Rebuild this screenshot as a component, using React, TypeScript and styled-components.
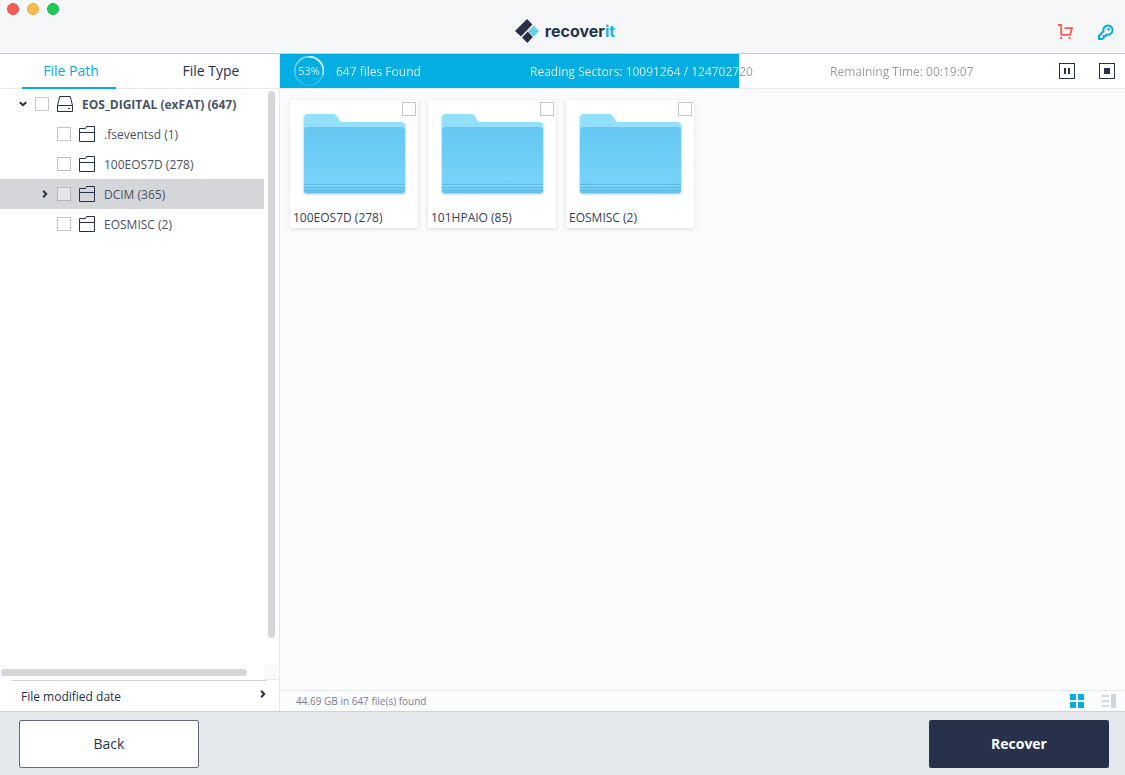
import React, { useState } from "react";
import styled, { createGlobalStyle, css } from "styled-components";

const color = {
  ink: "#273249",
  text: "#4a5263",
  cyan: "#04aee2",
  red: "#ff5a50",
  line: "#cfd2d8",
  softLine: "#e6e8ea",
  thumb: "#d5d6da",
};

const GlobalStyle = createGlobalStyle`
  *, *::before, *::after { box-sizing: border-box; }
  body {
    margin: 0;
    font-family: "Open Sans", "Noto Sans", sans-serif;
    font-size: 12px;
    line-height: 16px;
    color: ${color.ink};
  }
  button { font: inherit; color: inherit; border: 0; padding: 0; background: none; cursor: pointer; }
  svg { display: block; }
`;

const Window = styled.div`
  display: flex;
  flex-direction: column;
  min-height: 100vh;
  background: #fbfbfb;
`;

/* Caption text sits a little below the middle of its row. */
const Caption = styled.span`
  padding-top: 2px;
`;

/* Title bar */

const TitleBar = styled.header`
  display: grid;
  grid-template-columns: 1fr auto 1fr;
  align-items: center;
  height: 54px;
  padding: 0 11px 0 7px;
  background: #f5f7f9;
  border-bottom: 1px solid #cbced4;
`;

const WindowControls = styled.div`
  display: flex;
  gap: 8px;
  align-self: start;
  padding-top: 3px;
`;

const WindowDot = styled.button<{ $fill: string; $edge: string }>`
  width: 12px;
  height: 12px;
  border-radius: 50%;
  background: ${(p) => p.$fill};
  border: 1px solid ${(p) => p.$edge};
`;

const Brand = styled.div`
  display: flex;
  align-items: center;
  gap: 6px;
  padding: 8px 0 0 9px;
`;

const BrandName = styled.span`
  font-family: Inter, sans-serif;
  font-size: 16px;
  line-height: 20px;
  font-weight: 700;
  em { font-style: normal; color: #1cb4e6; }
`;

const TitleActions = styled.div`
  display: flex;
  justify-content: flex-end;
  gap: 24px;
  padding-top: 10px;
`;

const Main = styled.main`
  display: grid;
  grid-template-columns: 280px minmax(0, 1fr);
  flex: 1;
`;

/* Sidebar */

const Sidebar = styled.aside`
  display: flex;
  flex-direction: column;
  background: #fff;
  border-right: 1px solid ${color.softLine};
`;

const Tabs = styled.div`
  display: flex;
  gap: 46px;
  height: 35px;
  padding-left: 22px;
  border-bottom: 1px solid ${color.softLine};
`;

const Tab = styled.button<{ $active: boolean }>`
  width: 94px;
  height: 35px;
  padding-left: 4px;
  font-size: 14px;
  line-height: 20px;
  border-bottom: 2px solid ${(p) => (p.$active ? color.cyan : "transparent")};
  color: ${(p) => (p.$active ? color.cyan : color.ink)};
`;

const TreePane = styled.div`
  display: grid;
  grid-template-columns: minmax(0, 1fr) 15px;
  grid-template-rows: 1fr 15px;
  flex: 1;
`;

const Tree = styled.ul`
  margin: 0;
  padding: 0;
  list-style: none;
`;

const TreeRow = styled.li<{ $depth: number; $selected: boolean }>`
  display: flex;
  align-items: center;
  height: 30px;
  padding-left: ${(p) => 16 + p.$depth * 22}px;
  background: ${(p) => (p.$selected ? color.thumb : "transparent")};
`;

const Expander = styled.button`
  display: grid;
  place-items: center;
  width: 14px;
  height: 14px;
  margin-right: 5px;
`;

const ExpanderSpace = styled.span`
  width: 14px;
  margin-right: 5px;
`;

const TreeLabel = styled.label<{ $strong: boolean }>`
  display: flex;
  align-items: center;
  gap: 8px;
  color: ${color.text};
  white-space: nowrap;
  font-weight: ${(p) => (p.$strong ? 700 : 400)};
`;

const CheckBox = styled.input.attrs({ type: "checkbox" })`
  appearance: none;
  width: 14px;
  height: 14px;
  margin: 0;
  border: 1px solid rgba(60, 66, 90, 0.3);
  background: rgba(255, 255, 255, 0.4);
  &:checked { background: ${color.cyan}; }
`;

const VerticalTrack = styled.div`
  padding: 2px 4px 27px;
`;

const HorizontalTrack = styled.div`
  padding: 4px 17px 4px 1px;
`;

const Thumb = styled.div`
  width: 100%;
  height: 100%;
  border-radius: 4px;
  background: ${color.thumb};
`;

const TrackCorner = styled.div`
  background: #fafafa;
  border-bottom: 1px solid ${color.softLine};
`;

const DateFilter = styled.button`
  display: flex;
  align-items: center;
  justify-content: space-between;
  height: 31px;
  margin: 0 12px 0 11px;
  padding: 0 0 0 10px;
  border-top: 1px solid ${color.line};
  > svg { margin-bottom: 4px; }
`;

/* Results */

const Results = styled.section`
  display: flex;
  flex-direction: column;
  min-width: 0;
`;

const ScanBar = styled.div<{ $fill: number }>`
  height: 35px;
  border-bottom: 1px solid ${color.softLine};
  background: linear-gradient(to right, ${color.cyan} ${(p) => p.$fill}%, #fff ${(p) => p.$fill}%);
`;

/* Text turns from white to grey where the filled part of the bar ends. */
const ScanInfo = styled.div<{ $fill: number }>`
  display: grid;
  grid-template-columns: 42px 194px 300px 1fr auto;
  align-items: center;
  height: 34px;
  padding: 0 10px 0 14px;
  color: transparent;
  background: linear-gradient(to right, #e8f7fd ${(p) => p.$fill}%, #999 ${(p) => p.$fill}%);
  background-clip: text;
  -webkit-background-clip: text;
  white-space: nowrap;
`;

const Ring = styled.div`
  display: grid;
  place-items: center;
  width: 30px;
  height: 30px;
  font-size: 11px;
  > * { grid-area: 1 / 1; }
`;

const ScanActions = styled.div`
  display: flex;
  grid-column: 5;
  gap: 24px;
  color: ${color.ink};
`;

const CardGrid = styled.ul`
  display: flex;
  flex-wrap: wrap;
  align-content: flex-start;
  flex: 1;
  gap: 10px;
  margin: 0;
  padding: 11px 10px;
  list-style: none;
`;

const Card = styled.li`
  width: 128px;
  height: 128px;
  background: #fff;
  color: #364057;
  box-shadow: 0 1px 4px rgba(0, 0, 0, 0.12);
`;

const CardLabel = styled.label`
  display: grid;
  grid-template-rows: 14px 1fr 16px;
  height: 100%;
  padding: 2px 2px 2px 3px;
  > input { justify-self: end; }
`;

const CardArt = styled.div`
  padding-left: 7px;
  margin-top: -4px;
`;

const StatusBar = styled.div`
  display: flex;
  align-items: center;
  justify-content: space-between;
  height: 21px;
  padding: 0 8px 0 16px;
  border-top: 1px solid ${color.softLine};
  background: #fafcfe;
  font-size: 10px;
  color: #7b8090;
`;

const ViewSwitch = styled.div`
  display: flex;
  gap: 18px;
`;

/* Footer */

const Footer = styled.footer`
  display: flex;
  align-items: flex-start;
  justify-content: space-between;
  height: 64px;
  padding: 8px 16px 0 19px;
  border-top: 1px solid ${color.line};
  background: #e5e9ec;
`;

const FooterButton = styled.button<{ $primary?: boolean }>`
  width: 180px;
  height: 48px;
  border-radius: 2px;
  font-size: 14px;
  line-height: 20px;
  ${(p) =>
    p.$primary
      ? css`background: #27324a; color: #fff; font-weight: 700;`
      : css`background: #fff; border: 1px solid #636a7d;`}
`;

/* Drawings */

const BrandMark = () => (
  <svg width="24" height="24" viewBox="0 0 24 24" aria-hidden="true">
    <path d="M12 0L17.4 5.6L6 17.6L0 12Z" fill="#273249" />
    <path d="M12.8 12.6L17.8 18L12.4 24L7 18.5Z" fill="#273249" />
    <path d="M18.6 6.8L24 12L18.6 17.4L13.2 12Z" fill="#45c8ee" />
    <path d="M16.4 9.4h4.4M14.4 11.6h8.8M15.4 14.2h6.4" stroke="#a4e4f6" strokeWidth=".7" />
  </svg>
);

const CartIcon = () => (
  <svg width="16" height="16" viewBox="0 0 16 16" fill="none" stroke={color.red} strokeWidth="1.8" aria-hidden="true">
    <path d="M0 1h3.200V10.800H12.200L14 4.200H6.500" />
    <path d="M2 14h2M10.500 14h2" strokeWidth="2" />
  </svg>
);

const KeyIcon = () => (
  <svg width="16" height="16" viewBox="0 0 16 16" fill="none" stroke={color.cyan} strokeWidth="2" aria-hidden="true">
    <path d="M5.5 7.2a4.6 4.6 0 1 1 3.3 3.3L7.4 12H5.7v1.700L4.300 15H1v-3.300Z" strokeLinejoin="round" />
    <circle cx="10.600" cy="5.200" r="1.200" fill={color.cyan} stroke="none" />
  </svg>
);

const Chevron = ({ down }: { down?: boolean }) => (
  <svg width="8" height="8" viewBox="0 0 8 8" fill="none" stroke={color.ink} strokeWidth="2" aria-hidden="true">
    <path d={down ? "M.8 2.2L4 5.2L7.2 2.2" : "M2.2 .8L5.2 4L2.2 7.2"} />
  </svg>
);

const DriveIcon = () => (
  <svg width="17" height="16" viewBox="0 0 17 16" fill="none" stroke={color.ink} aria-hidden="true">
    <path d="M.5 9.5L2.7 .5H13.3L15.5 9.5V15.5H.5ZM.5 9.5H15.5M11 12.5h2" />
  </svg>
);

const FolderIcon = () => (
  <svg width="17" height="16" viewBox="0 0 17 16" fill="none" stroke={color.ink} aria-hidden="true">
    <path d="M.5 2.5H6.5L7.5 .5H15.5V15.5H.5ZM.5 6.5H15.5" />
  </svg>
);

const BigFolder = ({ id }: { id: string }) => (
  <svg width="108" height="88" viewBox="0 0 108 88" aria-hidden="true">
    <defs>
      <linearGradient id={id} x1="0" y1="0" x2="0" y2="1">
        <stop offset="0" stopColor="#64c8f3" />
        <stop offset="1" stopColor="#7bd5fa" />
      </linearGradient>
      <filter id={`${id}-shadow`} x="-5%" y="-5%" width="110%" height="115%">
        <feDropShadow dx="0" dy="1" stdDeviation="1" floodColor="#1e5070" floodOpacity=".4" />
      </filter>
    </defs>
    <g filter={`url(#${id}-shadow)`}>
      <path d="M4 6a4 4 0 0 1 4-4H33c2 0 3 .8 4.500 3.200S39.500 10 42 10H101a4 4 0 0 1 4 4V78a3 3 0 0 1-3 3H7a3 3 0 0 1-3-3Z" fill="#93dffc" />
      <path d="M4 19a4 4 0 0 1 4-4H101a4 4 0 0 1 4 4V78a3 3 0 0 1-3 3H7a3 3 0 0 1-3-3Z" fill={`url(#${id})`} />
    </g>
    <path d="M4 72.500H105M4 75.500H105" stroke="#5dbae6" strokeWidth="1" />
    <path d="M4 70.500H105" stroke="#70caf2" strokeWidth="1" />
    <path d="M4 77H105v1a3 3 0 0 1-3 3H7a3 3 0 0 1-3-3Z" fill="#68c0ea" />
  </svg>
);

const RingArt = () => (
  <svg width="30" height="30" viewBox="0 0 30 30" fill="none" stroke="#fff" aria-hidden="true">
    <defs>
      <linearGradient id="ring-fade" x1="0" y1="0" x2="0" y2="1">
        <stop offset="0" stopColor="#fff" stopOpacity=".6" />
        <stop offset="1" stopColor="#fff" stopOpacity=".15" />
      </linearGradient>
    </defs>
    <circle cx="15" cy="15" r="14.200" stroke="url(#ring-fade)" strokeWidth="1.500" />
    <path d="M15 .9A14.100 14.100 0 0 1 29 19" strokeWidth="1.700" strokeOpacity=".7" />
  </svg>
);

const PauseIcon = () => (
  <svg width="16" height="16" viewBox="0 0 16 16" aria-hidden="true">
    <rect x=".5" y=".5" width="15" height="15" fill="none" stroke={color.ink} />
    <path d="M5 5h2v6H5zM9 5h2v6H9z" fill={color.ink} />
  </svg>
);

const StopIcon = () => (
  <svg width="16" height="16" viewBox="0 0 16 16" aria-hidden="true">
    <rect x=".5" y=".5" width="15" height="15" fill="none" stroke={color.ink} />
    <path d="M5 5h6v6H5z" fill={color.ink} />
  </svg>
);

const GridIcon = () => (
  <svg width="14" height="14" viewBox="0 0 14 14" fill={color.cyan} aria-hidden="true">
    <path d="M0 0h6v6H0zM8 0h6v6H8zM0 8h6v6H0zM8 8h6v6H8z" />
  </svg>
);

const ListIcon = () => (
  <svg width="15" height="14" viewBox="0 0 15 14" fill="#cdd7dc" aria-hidden="true">
    <path d="M0 1h7v2H0zM0 6h7v2H0zM0 11h7v2H0zM9 0h5v14H9z" />
  </svg>
);

/* Data */

type Node = { name: string; depth: number; open?: boolean; branch?: boolean };

const nodes: Node[] = [
  { name: "EOS_DIGITAL (exFAT) (647)", depth: 0, branch: true, open: true },
  { name: ".fseventsd (1)", depth: 1 },
  { name: "100EOS7D (278)", depth: 1 },
  { name: "DCIM (365)", depth: 1, branch: true },
  { name: "EOSMISC (2)", depth: 1 },
];

const folders = ["100EOS7D (278)", "101HPAIO (85)", "EOSMISC (2)"];
const scanned = 54.3;

export default function App() {
  const [tab, setTab] = useState("File Path");
  const [selected, setSelected] = useState("DCIM (365)");

  return (
    <Window>
      <GlobalStyle />
      <TitleBar>
        <WindowControls>
          <WindowDot aria-label="Close" $fill="#fc5b57" $edge="#e9504e" />
          <WindowDot aria-label="Minimize" $fill="#fdbc4e" $edge="#e8ab45" />
          <WindowDot aria-label="Zoom" $fill="#1dcb57" $edge="#18b54c" />
        </WindowControls>
        <Brand>
          <BrandMark />
          <BrandName>recover<em>it</em></BrandName>
        </Brand>
        <TitleActions>
          <button aria-label="Buy"><CartIcon /></button>
          <button aria-label="Register"><KeyIcon /></button>
        </TitleActions>
      </TitleBar>

      <Main>
        <Sidebar>
          <Tabs role="tablist">
            {["File Path", "File Type"].map((name) => (
              <Tab key={name} role="tab" aria-selected={tab === name} $active={tab === name} onClick={() => setTab(name)}>
                {name}
              </Tab>
            ))}
          </Tabs>
          <TreePane>
            <Tree>
              {nodes.map((n) => (
                <TreeRow key={n.name} $depth={n.depth} $selected={selected === n.name} onClick={() => setSelected(n.name)}>
                  {n.branch ? (
                    <Expander aria-label={`Toggle ${n.name}`}><Chevron down={n.open} /></Expander>
                  ) : (
                    <ExpanderSpace />
                  )}
                  <TreeLabel $strong={n.depth === 0}>
                    <CheckBox />
                    {n.depth === 0 ? <DriveIcon /> : <FolderIcon />}
                    <Caption>{n.name}</Caption>
                  </TreeLabel>
                </TreeRow>
              ))}
            </Tree>
            <VerticalTrack><Thumb /></VerticalTrack>
            <HorizontalTrack><Thumb /></HorizontalTrack>
            <TrackCorner />
          </TreePane>
          <DateFilter>
            <Caption>File modified date</Caption>
            <Chevron />
          </DateFilter>
        </Sidebar>

        <Results>
          <ScanBar $fill={scanned}>
            <ScanInfo $fill={scanned}>
              <Ring>
                <RingArt />
                <span>53%</span>
              </Ring>
              <Caption>647 files Found</Caption>
              <Caption>Reading Sectors: 10091264 / 124702720</Caption>
              <Caption>Remaining Time: 00:19:07</Caption>
              <ScanActions>
                <button aria-label="Pause"><PauseIcon /></button>
                <button aria-label="Stop"><StopIcon /></button>
              </ScanActions>
            </ScanInfo>
          </ScanBar>
          <CardGrid>
            {folders.map((name, i) => (
              <Card key={name}>
                <CardLabel>
                  <CheckBox />
                  <CardArt><BigFolder id={`folder-${i}`} /></CardArt>
                  <span>{name}</span>
                </CardLabel>
              </Card>
            ))}
          </CardGrid>
          <StatusBar>
            <span>44.69 GB in 647 file(s) found</span>
            <ViewSwitch>
              <button aria-label="Grid view"><GridIcon /></button>
              <button aria-label="Detail view"><ListIcon /></button>
            </ViewSwitch>
          </StatusBar>
        </Results>
      </Main>

      <Footer>
        <FooterButton>Back</FooterButton>
        <FooterButton $primary>Recover</FooterButton>
      </Footer>
    </Window>
  );
}
